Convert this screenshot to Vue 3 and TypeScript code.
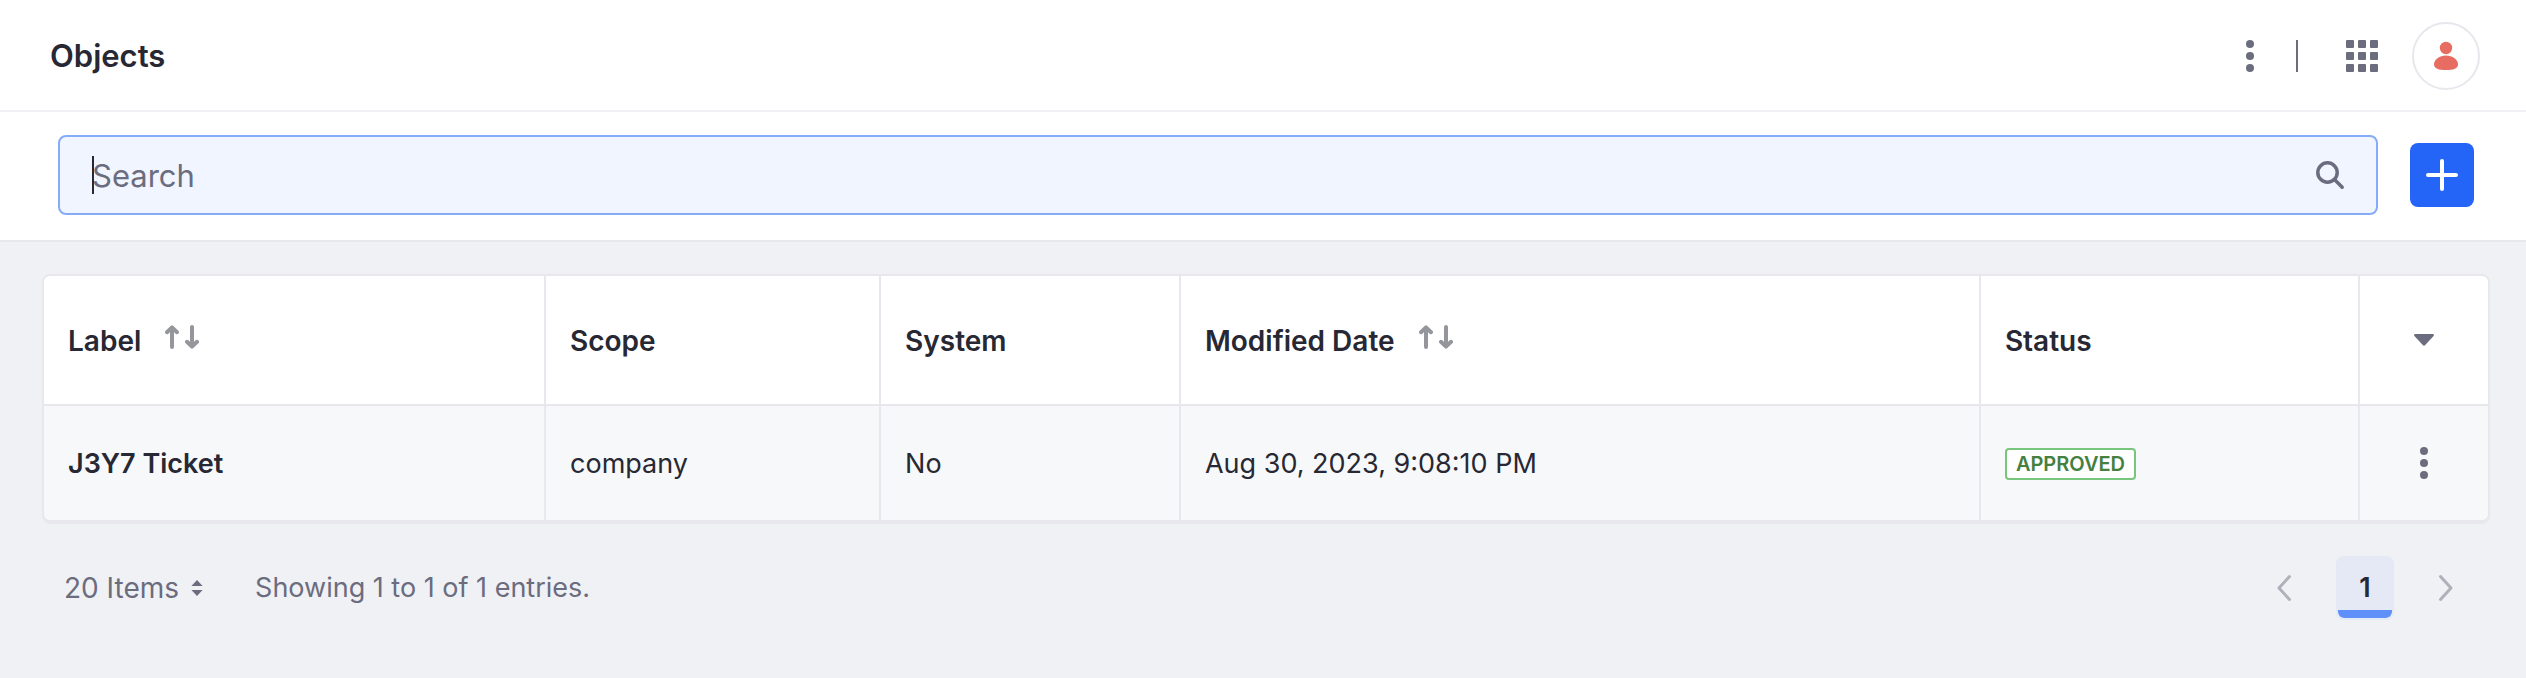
<script setup lang="ts">
import { ref } from 'vue'

interface Column {
  key: string
  title: string
  sortable: boolean
}

interface ObjectRow {
  label: string
  scope: string
  system: string
  modified: string
  status: string
}

const columns: Column[] = [
  { key: 'label', title: 'Label', sortable: true },
  { key: 'scope', title: 'Scope', sortable: false },
  { key: 'system', title: 'System', sortable: false },
  { key: 'modified', title: 'Modified Date', sortable: true },
  { key: 'status', title: 'Status', sortable: false },
]

const rows: ObjectRow[] = [
  {
    label: 'J3Y7 Ticket',
    scope: 'company',
    system: 'No',
    modified: 'Aug 30, 2023, 9:08:10 PM',
    status: 'Approved',
  },
]

const query = ref('')
</script>

<template>
  <div class="page">
    <header class="header">
      <h1 class="title">Objects</h1>
      <div class="header-tools">
        <button class="icon-button" type="button" aria-label="Options">
          <svg width="32" height="32" viewBox="0 0 32 32" fill="currentColor">
            <circle cx="16" cy="4" r="4" />
            <circle cx="16" cy="16" r="4" />
            <circle cx="16" cy="28" r="4" />
          </svg>
        </button>
        <span class="divider"></span>
        <button class="icon-button" type="button" aria-label="Applications">
          <svg width="32" height="32" viewBox="0 0 32 32" fill="currentColor">
            <template v-for="y in 3" :key="y">
              <rect
                v-for="x in 3"
                :key="x"
                :x="(x - 1) * 12"
                :y="(y - 1) * 12"
                width="8"
                height="8"
                rx="1"
              />
            </template>
          </svg>
        </button>
        <button class="avatar" type="button" aria-label="User menu">
          <svg width="32" height="32" viewBox="0 0 32 32" fill="currentColor">
            <circle cx="16" cy="8" r="6.2" />
            <path d="M16 15.6c6.6 0 12 4.2 12 8.6 0 4.4-4.6 5.8-12 5.8S4 28.6 4 24.2c0-4.4 5.4-8.6 12-8.6z" />
          </svg>
        </button>
      </div>
    </header>

    <form class="toolbar" role="search" @submit.prevent>
      <div class="search">
        <input v-model="query" class="search-input" type="text" placeholder="Search" aria-label="Search" />
        <span v-if="!query" class="caret"></span>
        <button class="search-button" type="submit" aria-label="Submit search">
          <svg width="32" height="32" viewBox="0 0 32 32" fill="none" stroke="currentColor" stroke-width="3.5">
            <circle cx="13.5" cy="13.5" r="9.7" />
            <path d="M20.5 20.5L28.2 28.2" stroke-linecap="round" />
          </svg>
        </button>
      </div>
      <button class="add" type="button" aria-label="Add object">
        <svg width="32" height="32" viewBox="0 0 32 32" stroke="currentColor" stroke-width="4" stroke-linecap="round">
          <path d="M16 2v28M2 16h28" />
        </svg>
      </button>
    </form>

    <main class="content">
      <table class="table">
        <colgroup>
          <col class="col-label" />
          <col class="col-scope" />
          <col class="col-system" />
          <col class="col-modified" />
          <col class="col-status" />
          <col class="col-actions" />
        </colgroup>
        <thead>
          <tr>
            <th v-for="column in columns" :key="column.key" scope="col">
              <div class="heading">
                {{ column.title }}
                <button v-if="column.sortable" class="sort" type="button" :aria-label="`Sort by ${column.title}`">
                  <svg
                    width="34"
                    height="24"
                    viewBox="0 0 34 24"
                    fill="none"
                    stroke="currentColor"
                    stroke-width="4"
                    stroke-linecap="round"
                    stroke-linejoin="round"
                  >
                    <path d="M7 22V3M2 7.2L7 2.4L12 7.2M27 2V21M22 16.8L27 21.6L32 16.8" />
                  </svg>
                </button>
              </div>
            </th>
            <th class="actions" scope="col">
              <button class="icon-button" type="button" aria-label="Choose columns">
                <svg width="32" height="32" viewBox="0 0 32 32" fill="currentColor">
                  <path d="M7.2 10h17.6c1.2 0 1.5 1.1.8 1.9l-8.4 9.2c-.7.8-1.7.8-2.4 0L6.4 11.9C5.7 11.1 6 10 7.2 10z" />
                </svg>
              </button>
            </th>
          </tr>
        </thead>
        <tbody>
          <tr v-for="row in rows" :key="row.label">
            <td><a class="row-link" href="#">{{ row.label }}</a></td>
            <td>{{ row.scope }}</td>
            <td>{{ row.system }}</td>
            <td>{{ row.modified }}</td>
            <td><span class="badge">{{ row.status }}</span></td>
            <td class="actions">
              <button class="icon-button" type="button" :aria-label="`Actions for ${row.label}`">
                <svg width="32" height="32" viewBox="0 0 32 32" fill="currentColor">
                  <circle cx="16" cy="4" r="4" />
                  <circle cx="16" cy="16" r="4" />
                  <circle cx="16" cy="28" r="4" />
                </svg>
              </button>
            </td>
          </tr>
        </tbody>
      </table>

      <footer class="footer">
        <button class="page-size" type="button">
          20 Items
          <svg width="12" height="16" viewBox="0 0 12 16" fill="currentColor">
            <path d="M6 0L11.6 6H.4zM6 16L.4 10h11.2z" />
          </svg>
        </button>
        <span>Showing 1 to 1 of 1 entries.</span>
        <nav class="pagination" aria-label="Pagination">
          <button class="page-step" type="button" aria-label="Previous page">
            <svg width="16" height="28" viewBox="0 0 16 28">
              <path d="M13.5 2.5L3 14L13.5 25.5" />
            </svg>
          </button>
          <button class="page-current" type="button" aria-current="page">1</button>
          <button class="page-step" type="button" aria-label="Next page">
            <svg width="16" height="28" viewBox="0 0 16 28">
              <path d="M2.5 2.5L13 14L2.5 25.5" />
            </svg>
          </button>
        </nav>
      </footer>
    </main>
  </div>
</template>

<style>
body {
  margin: 0;
  background: #f0f1f5;
}
</style>

<style scoped>
.page {
  color: #272833;
  font: 400 27px/40px Inter, "Liberation Sans", sans-serif;
}

.page * {
  box-sizing: border-box;
}

button {
  padding: 0;
  border: 0;
  background: none;
  color: inherit;
  font: inherit;
  cursor: pointer;
}

svg {
  display: block;
}

.header {
  display: flex;
  align-items: center;
  justify-content: space-between;
  padding: 22px 46px 20px 50px;
  border-bottom: 2px solid #f0f1f5;
  background: #fff;
}

.title {
  margin: 0;
  font-size: 31px;
  font-weight: 600;
}

.header-tools {
  display: flex;
  align-items: center;
  color: #6b6c7e;
}

.icon-button {
  color: #6b6c7e;
}

.divider {
  width: 2px;
  height: 32px;
  margin: 0 48px 0 30px;
  background: #6b6c7e;
}

.avatar {
  display: grid;
  place-items: center;
  width: 68px;
  height: 68px;
  margin-left: 34px;
  border: 2px solid #e7e7ed;
  border-radius: 50%;
  color: #e76d62;
}

.toolbar {
  display: flex;
  align-items: center;
  gap: 32px;
  padding: 23px 52px 25px 58px;
  border-bottom: 2px solid #e7e7ed;
  background: #fff;
}

.search {
  position: relative;
  display: flex;
  flex: 1;
  align-items: center;
  height: 80px;
  padding-right: 30px;
  border: 2px solid #86abf9;
  border-radius: 8px;
  background: #f0f5ff;
}

.search-input {
  flex: 1;
  height: 100%;
  min-width: 0;
  padding: 0 32px;
  border: 0;
  outline: 0;
  background: none;
  color: #272833;
  font: inherit;
  font-size: 31px;
}

.search-input::placeholder {
  color: #6b6c7e;
  opacity: 1;
}

.caret {
  position: absolute;
  top: 19px;
  left: 32px;
  width: 2px;
  height: 38px;
  background: #272833;
}

.search-button {
  color: #6b6c7e;
}

.add {
  display: grid;
  place-items: center;
  width: 64px;
  height: 64px;
  border-radius: 8px;
  background: #2465f8;
  color: #fff;
}

.content {
  padding: 32px 36px 0 42px;
}

.table {
  width: 100%;
  border: 2px solid #e7e7ed;
  border-radius: 8px;
  border-spacing: 0;
  box-shadow: 0 2px 0 #e7e7ed;
  table-layout: fixed;
}

.col-label {
  width: 20.46%;
}

.col-scope {
  width: 13.71%;
}

.col-system {
  width: 12.27%;
}

.col-modified {
  width: 32.73%;
}

.col-status {
  width: 15.51%;
}

th,
td {
  padding: 2px 24px 0;
  border-left: 2px solid #e7e7ed;
  text-align: left;
}

th:first-child,
td:first-child {
  border-left: 0;
}

th {
  height: 130px;
  border-bottom: 2px solid #e7e7ed;
  background: #fff;
  font-size: 28px;
  font-weight: 600;
}

td {
  height: 114px;
  background: #f7f8fa;
}

th:first-child {
  border-top-left-radius: 6px;
}

th:last-child {
  border-top-right-radius: 6px;
}

td:first-child {
  border-bottom-left-radius: 6px;
}

td:last-child {
  border-bottom-right-radius: 6px;
}

.heading {
  display: flex;
  align-items: center;
  gap: 24px;
}

.sort {
  padding-bottom: 8px;
  color: #95959c;
}

th.actions,
td.actions {
  padding: 0;
}

.actions .icon-button {
  display: block;
  margin: 0 auto;
}

.row-link {
  color: inherit;
  font-weight: 600;
  text-decoration: none;
}

.badge {
  display: block;
  width: fit-content;
  padding: 0 9px;
  border: 2px solid #77c67c;
  border-radius: 4px;
  background: #fff;
  color: #44803f;
  font-size: 20px;
  font-weight: 600;
  line-height: 28px;
  text-transform: uppercase;
}

.footer {
  display: flex;
  align-items: center;
  padding: 34px 15px 0 22px;
  color: #6b6c7e;
}

.page-size {
  display: flex;
  align-items: center;
  gap: 12px;
  margin-right: 52px;
  font-size: 28px;
}

.pagination {
  display: flex;
  gap: 23px;
  margin-left: auto;
}

.page-step {
  display: grid;
  place-items: center;
  width: 58px;
  height: 64px;
}

.page-step path {
  fill: none;
  stroke: #afb0ba;
  stroke-width: 3;
  stroke-linecap: round;
  stroke-linejoin: round;
}

.page-current {
  width: 58px;
  height: 64px;
  border: 2px solid #e4e9f5;
  border-radius: 8px;
  background: linear-gradient(#5f8ff9, #5f8ff9) bottom / 100% 8px no-repeat padding-box, #e4e9f5;
  color: #272833;
  font-weight: 600;
}
</style>
